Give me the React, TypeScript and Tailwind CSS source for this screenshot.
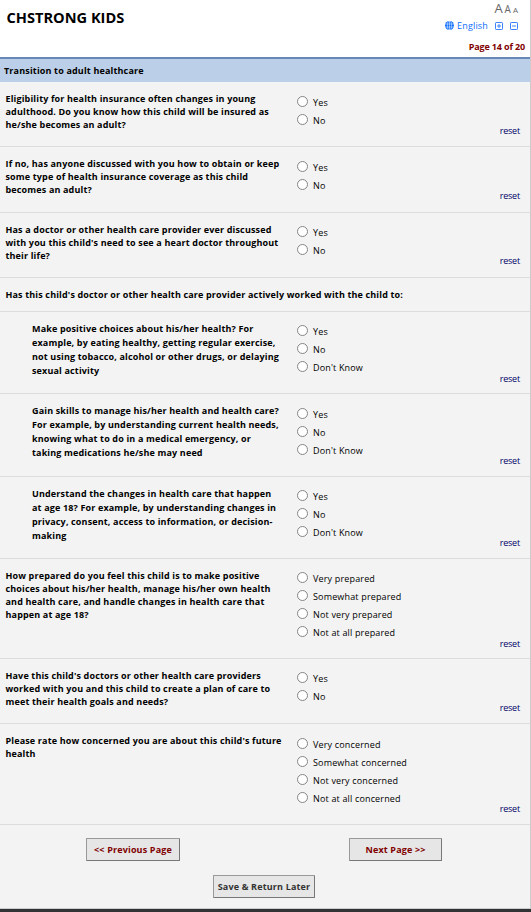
import clsx from "clsx"

type Question = {
  lines: string[]
  options?: string[]
  height: string
  textTop: string
  optionsTop?: string
  resetBottom?: string
  nested?: boolean
}

const yesNo = ["Yes", "No"]
const yesNoUnknown = ["Yes", "No", "Don't Know"]

const questions: Question[] = [
  {
    lines: [
      "Eligibility for health insurance often changes in young",
      "adulthood. Do you know how this child will be insured as",
      "he/she becomes an adult?",
    ],
    options: yesNo,
    height: "h-[65px]",
    textTop: "pt-[10px]",
    optionsTop: "pt-[12px]",
    resetBottom: "pb-[9px]",
  },
  {
    lines: [
      "If no, has anyone discussed with you how to obtain or keep",
      "some type of health insurance coverage as this child",
      "becomes an adult?",
    ],
    options: yesNo,
    height: "h-[66px]",
    textTop: "pt-[10px]",
    optionsTop: "pt-[12px]",
    resetBottom: "pb-[10px]",
  },
  {
    lines: [
      "Has a doctor or other health care provider ever discussed",
      "with you this child's need to see a heart doctor throughout",
      "their life?",
    ],
    options: yesNo,
    height: "h-[65px]",
    textTop: "pt-[10px]",
    optionsTop: "pt-[11px]",
    resetBottom: "pb-[10px]",
  },
  {
    lines: ["Has this child's doctor or other health care provider actively worked with the child to:"],
    height: "h-[34px]",
    textTop: "pt-[10px]",
  },
  {
    lines: [
      "Make positive choices about his/her health? For",
      "example, by eating healthy, getting regular exercise,",
      "not using tobacco, alcohol or other drugs, or delaying",
      "sexual activity",
    ],
    options: yesNoUnknown,
    height: "h-[82px]",
    textTop: "pt-[10px]",
    optionsTop: "pt-[11px]",
    resetBottom: "pb-[8px]",
    nested: true,
  },
  {
    lines: [
      "Gain skills to manage his/her health and health care?",
      "For example, by understanding current health needs,",
      "knowing what to do in a medical emergency, or",
      "taking medications he/she may need",
    ],
    options: yesNoUnknown,
    height: "h-[83px]",
    textTop: "pt-[10px]",
    optionsTop: "pt-[12px]",
    resetBottom: "pb-[9px]",
    nested: true,
  },
  {
    lines: [
      "Understand the changes in health care that happen",
      "at age 18? For example, by understanding changes in",
      "privacy, consent, access to information, or decision-",
      "making",
    ],
    options: yesNoUnknown,
    height: "h-[82px]",
    textTop: "pt-[10px]",
    optionsTop: "pt-[11px]",
    resetBottom: "pb-[9px]",
    nested: true,
  },
  {
    lines: [
      "How prepared do you feel this child is to make positive",
      "choices about his/her health, manage his/her own health",
      "and health care, and handle changes in health care that",
      "happen at age 18?",
    ],
    options: ["Very prepared", "Somewhat prepared", "Not very prepared", "Not at all prepared"],
    height: "h-[100px]",
    textTop: "pt-[10px]",
    optionsTop: "pt-[11px]",
    resetBottom: "pb-[8px]",
  },
  {
    lines: [
      "Have this child's doctors or other health care providers",
      "worked with you and this child to create a plan of care to",
      "meet their health goals and needs?",
    ],
    options: yesNo,
    height: "h-[65px]",
    textTop: "pt-[10px]",
    optionsTop: "pt-[11px]",
    resetBottom: "pb-[9px]",
  },
  {
    lines: ["Please rate how concerned you are about this child's future", "health"],
    options: ["Very concerned", "Somewhat concerned", "Not very concerned", "Not at all concerned"],
    height: "h-[101px]",
    textTop: "pt-[10px]",
    optionsTop: "pt-[12px]",
    resetBottom: "pb-[9px]",
  },
]

function QuestionRow({ question }: { question: Question }) {
  const { lines, options, height, textTop, optionsTop, resetBottom, nested } = question
  return (
    <div className={clsx("flex border-b border-[#dddddd]", height)}>
      <div
        className={clsx(
          "w-[297px] shrink-0 text-[9px] font-bold tracking-[0.15px] whitespace-nowrap",
          nested ? "pl-8 leading-[14px]" : "pl-[5.5px] leading-[13px]",
          textTop
        )}
      >
        {lines.map((line) => (
          <div key={line}>{line}</div>
        ))}
      </div>
      {options && (
        <>
          <div className={clsx("flex flex-1 flex-col", optionsTop)}>
            {options.map((option) => (
              <label key={option} className="flex h-[18px] items-start text-[9px] leading-[18px] tracking-[0.16px]">
                <span className="mt-[2px] mr-[5px] size-[11px] rounded-full border border-[#858585] bg-white" />
                {option}
              </label>
            ))}
          </div>
          <a
            className={clsx(
              "self-end pr-[10px] text-[9px] leading-[13px] tracking-[-0.2px] text-[#000066]",
              resetBottom
            )}
          >
            reset
          </a>
        </>
      )}
    </div>
  )
}

function GlobeIcon() {
  return (
    <svg className="mb-px size-[9px]" viewBox="0 0 9 9" fill="none">
      <circle cx="4.5" cy="4.5" r="4.5" fill="#0d6efd" />
      <path d="M0 3h9M0 6h9M4.5 0v9" stroke="#fff" strokeWidth=".5" />
      <ellipse cx="4.5" cy="4.5" rx="2.1" ry="4.5" stroke="#fff" strokeWidth=".5" />
    </svg>
  )
}

function SquareIcon({ plus }: { plus?: boolean }) {
  return (
    <svg className="size-2" viewBox="0 0 8 8" fill="none" stroke="#3b82fd">
      <rect x=".5" y=".5" width="7" height="7" rx=".7" />
      <path d={plus ? "M2 4h4M4 2v4" : "M2 4h4"} />
    </svg>
  )
}

export default function App() {
  return (
    <div className="flex h-[912px] w-[531px] flex-col bg-[#f3f3f3] font-['Open_Sans',sans-serif] text-black">
      <div className="flex h-[909px] flex-col border-r border-b border-[#cccccc]">
        <header className="flex h-[57px] justify-between bg-white">
          <h1 className="pt-[7px] pl-[6.5px] text-[14.6px] leading-[20px] font-bold">CHSTRONG KIDS</h1>
          <div className="flex flex-col items-end pr-[5px]">
            <div className="flex h-[18px] items-baseline gap-[2px] pr-[7px] text-[#666666]">
              <span className="text-[13px] leading-[17px]">A</span>
              <span className="text-[10px]">A</span>
              <span className="text-[8px]">A</span>
            </div>
            <div className="flex h-[16px] items-center pr-[7px] text-[9px] tracking-[0.16px] text-[#0d6efd]">
              <GlobeIcon />
              <span className="mr-[7px] ml-[3px]">English</span>
              <SquareIcon plus />
              <span className="w-[7px]" />
              <SquareIcon />
            </div>
            <div className="pt-[6px] text-[9px] leading-[14px] font-bold tracking-[-0.15px] text-[#800000]">
              Page 14 of 20
            </div>
          </div>
        </header>
        <h2 className="h-[25px] border-t-2 border-[#6788b8] bg-[#bccfe8] pl-1 text-[9px] leading-[24px] font-bold tracking-[0.16px]">
          Transition to adult healthcare
        </h2>
        {questions.map((question) => (
          <QuestionRow key={question.lines[0]} question={question} />
        ))}
        <div className="flex gap-[169px] pt-[13px] pl-[86px] text-[9px] font-bold tracking-[0.16px] text-[#800000]">
          <button className="h-[23px] w-[94px] rounded-[1px] border border-[#999999] border-r-[#777777] border-b-[#777777] bg-[#e6e6e6]">
            &lt;&lt; Previous Page
          </button>
          <button className="h-[23px] w-[93px] rounded-[1px] border border-[#999999] border-r-[#777777] border-b-[#777777] bg-[#e6e6e6]">
            Next Page &gt;&gt;
          </button>
        </div>
        <button className="mt-[14px] ml-[213px] h-[23px] w-[102px] rounded-[1px] border border-[#999999] border-r-[#777777] border-b-[#777777] bg-[#e6e6e6] text-[9px] font-bold tracking-[0.16px] whitespace-nowrap text-[#333333]">
          Save &amp; Return Later
        </button>
      </div>
      <div className="h-[3px] bg-[#303233]" />
    </div>
  )
}
